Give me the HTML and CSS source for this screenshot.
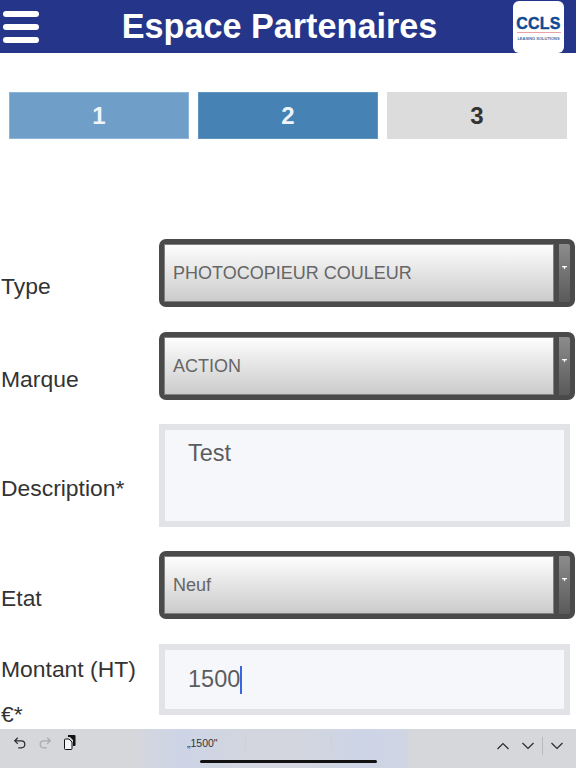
FILE: index.html
```html
<!DOCTYPE html>
<html lang="fr">
<head>
<meta charset="utf-8">
<title>Espace Partenaires</title>
<link rel="stylesheet" href="styles.css">
</head>
<body>
<div class="screen">
  <header class="topbar">
    <div class="burger"><span></span><span></span><span></span></div>
    <h1 class="title">Espace Partenaires</h1>
    <div class="logo">
      <div class="logo-name">CCLS</div>
      <div class="logo-rule"></div>
      <div class="logo-sub">LEASING SOLUTIONS</div>
    </div>
  </header>

  <nav class="steps">
    <div class="step step-done">1</div>
    <div class="step step-active">2</div>
    <div class="step step-next">3</div>
  </nav>

  <main class="form">
    <div class="row row-select">
      <div class="label">Type</div>
      <div class="select">
        <div class="select-value">PHOTOCOPIEUR COULEUR</div>
        <div class="select-btn"><svg class="caret" viewBox="0 0 6 5"><path d="M0 0H6V1.600H4.200L3 4.600 1.800 1.600H0Z"/></svg></div>
      </div>
    </div>
    <div class="row row-select">
      <div class="label">Marque</div>
      <div class="select">
        <div class="select-value">ACTION</div>
        <div class="select-btn"><svg class="caret" viewBox="0 0 6 5"><path d="M0 0H6V1.600H4.200L3 4.600 1.800 1.600H0Z"/></svg></div>
      </div>
    </div>
    <div class="row row-area">
      <div class="label">Description*</div>
      <div class="field field-area">Test</div>
    </div>
    <div class="row row-select">
      <div class="label">Etat</div>
      <div class="select">
        <div class="select-value">Neuf</div>
        <div class="select-btn"><svg class="caret" viewBox="0 0 6 5"><path d="M0 0H6V1.600H4.200L3 4.600 1.800 1.600H0Z"/></svg></div>
      </div>
    </div>
    <div class="row row-amount">
      <div class="label label-amount">Montant (HT) €*</div>
      <div class="field field-input">1500<span class="cursor"></span></div>
    </div>
  </main>

  <footer class="kbbar">
    <div class="kb-left">
      <svg class="kb-icon" viewBox="0 0 16 16"><path d="M5.500 2 2 5.500 5.500 9M2 5.500h7.500a4 4 0 0 1 0 8H6" fill="none" stroke="#2b2b2e" stroke-width="1.400"/></svg>
      <svg class="kb-icon" viewBox="0 0 16 16"><path d="M10.500 2 14 5.500 10.500 9M14 5.500H6.500a4 4 0 0 0 0 8H10" fill="none" stroke="#a9aaae" stroke-width="1.400"/></svg>
      <svg class="kb-paste" viewBox="0 0 12 15"><path d="M4 0h6.500a1 1 0 0 1 1 1v9a1 1 0 0 1-1 1H9V5L6 2H4Z" fill="#111"/><path d="M1.500 4H5l3 3v6.500a1 1 0 0 1-1 1H1.500a1 1 0 0 1-1-1V5a1 1 0 0 1 1-1Z" fill="#f4f4f6" stroke="#111"/></svg>
    </div>
    <div class="kb-suggest">„1500"</div>
    <div class="kb-sep kb-sep-a"></div>
    <div class="kb-sep kb-sep-b"></div>
    <div class="kb-right">
      <svg class="kb-chev" viewBox="0 0 14 10"><path d="M1.500 8 7 2.500 12.500 8" fill="none" stroke="#2b2b2e" stroke-width="1.200"/></svg>
      <svg class="kb-chev" viewBox="0 0 14 10"><path d="M1.500 2 7 7.500 12.500 2" fill="none" stroke="#2b2b2e" stroke-width="1.200"/></svg>
      <div class="kb-divider"></div>
      <svg class="kb-chev" viewBox="0 0 14 10"><path d="M1.500 2 7 7.500 12.500 2" fill="none" stroke="#2b2b2e" stroke-width="1.200"/></svg>
    </div>
    <div class="home-bar"></div>
  </footer>
</div>
</body>
</html>
```
FILE: styles.css
```css
* { box-sizing: border-box; }
html, body { margin: 0; padding: 0; }
body { background: #fff; font-family: "Liberation Sans", Arial, sans-serif; color: #333; }
.screen { position: relative; width: 576px; height: 768px; overflow: hidden; }

.topbar { height: 53px; background: #25358a; display: flex; align-items: center; padding: 0 12px 0 3px; }
.burger { width: 36px; display: flex; flex-direction: column; gap: 7px; }
.burger span { display: block; height: 6px; border-radius: 3px; background: #fff; }
.title { flex: 1; margin: 0; font-size: 34.200px; font-weight: 700; color: #fff; text-align: center; padding-left: 7px; }
.logo { width: 51px; height: 52px; background: #fff; border-radius: 6px; display: flex; flex-direction: column; align-items: center; padding-top: 15px; }
.logo-name { font-size: 16px; line-height: 15px; font-weight: 700; color: #0f4a90; letter-spacing: 0.2px; -webkit-text-stroke: 0.4px #0f4a90; }
.logo-rule { width: 44px; height: 1px; background: #e8a3a8; margin-top: 1px; }
.logo-sub { font-size: 4px; line-height: 5px; font-weight: 700; color: #4a6c9c; margin-top: 3px; white-space: nowrap; }

.steps { display: flex; gap: 9px; padding: 39px 9px 0; }
.step { width: 180px; height: 47px; display: flex; align-items: center; justify-content: center; font-size: 24px; font-weight: 700; }
.step-done { background: #6f9fc8; border: 1px solid #8db4d6; color: #eef4f9; }
.step-active { background: #4682b4; border: 1px solid #5f94c0; color: #eef4f9; }
.step-next { background: #dcdcdc; color: #333; }

.form { padding-top: 100px; display: flex; flex-direction: column; }
.row { display: flex; }
.label { width: 159px; flex: none; padding-left: 1px; font-size: 22.900px; line-height: 33px; color: #333; }
.row-select { height: 68px; margin-bottom: 25px; }
.row-select .label { padding-top: 31px; }
.row-area { height: 103px; margin-bottom: 24px; margin-top: -1px; }
.row-area .label { padding-top: 48px; }
.row-amount { height: 71px; }
.label-amount { line-height: 45px; padding-top: 3px; }

.select { width: 416px; height: 68px; border: 5px solid #4a4a4a; border-radius: 7px; background: #4a4a4a; display: flex; gap: 5px; }
.select-value { flex: 1; display: flex; align-items: center; padding: 1px 8px 0; font-size: 18px; color: #666; background: linear-gradient(#fdfdfd, #cbcbcb); border: 1px solid #808080; }
.select-btn { width: 11px; background: linear-gradient(#8c8c8c, #5a5a5a); display: flex; justify-content: center; padding-top: 22px; border-radius: 0 2px 2px 0; }
.caret { width: 5px; height: 4px; fill: #fff; }

.field { width: 411px; border: 6px solid #e1e3e7; background: #f6f7fa; font-size: 23.500px; color: #5c5c60; }
.field-area { height: 103px; padding: 9px 23px; line-height: 28px; }
.field-input { height: 71px; padding: 0 23px 2px; line-height: 30px; display: flex; align-items: center; }
.cursor { display: inline-block; width: 2px; height: 28px; background: #3a66e0; margin-top: 2px; }

.kbbar { position: absolute; left: 0; right: 0; bottom: 0; height: 39px; background: linear-gradient(90deg, #d6d7db 0, #d6d7db 130px, #cdd4e6 180px, #d3d6df 250px, #d3d6df 300px, #cdd4e6 360px, #cfd5e3 405px, #d6d7db 412px); }
.kb-left { position: absolute; left: 13px; top: 6px; display: flex; gap: 11px; align-items: center; }
.kb-icon { width: 14px; height: 14px; display: block; }
.kb-paste { width: 12px; height: 15px; display: block; margin-left: 1px; }
.kb-suggest { position: absolute; left: 187px; top: 8px; font-size: 10.500px; line-height: 12px; color: #333; }
.kb-sep { position: absolute; top: 6px; width: 1px; height: 16px; background: #cfd0d6; }
.kb-sep-a { left: 245px; }
.kb-sep-b { left: 331px; }
.kb-right { position: absolute; left: 496px; top: 8px; display: flex; align-items: center; gap: 11px; }
.kb-chev { width: 14px; height: 10px; display: block; }
.kb-divider { width: 1px; height: 18px; background: #b9babe; margin: 0 -4px; }
.home-bar { position: absolute; left: 200px; top: 31px; width: 177px; height: 3px; border-radius: 2px; background: #111; }
```
